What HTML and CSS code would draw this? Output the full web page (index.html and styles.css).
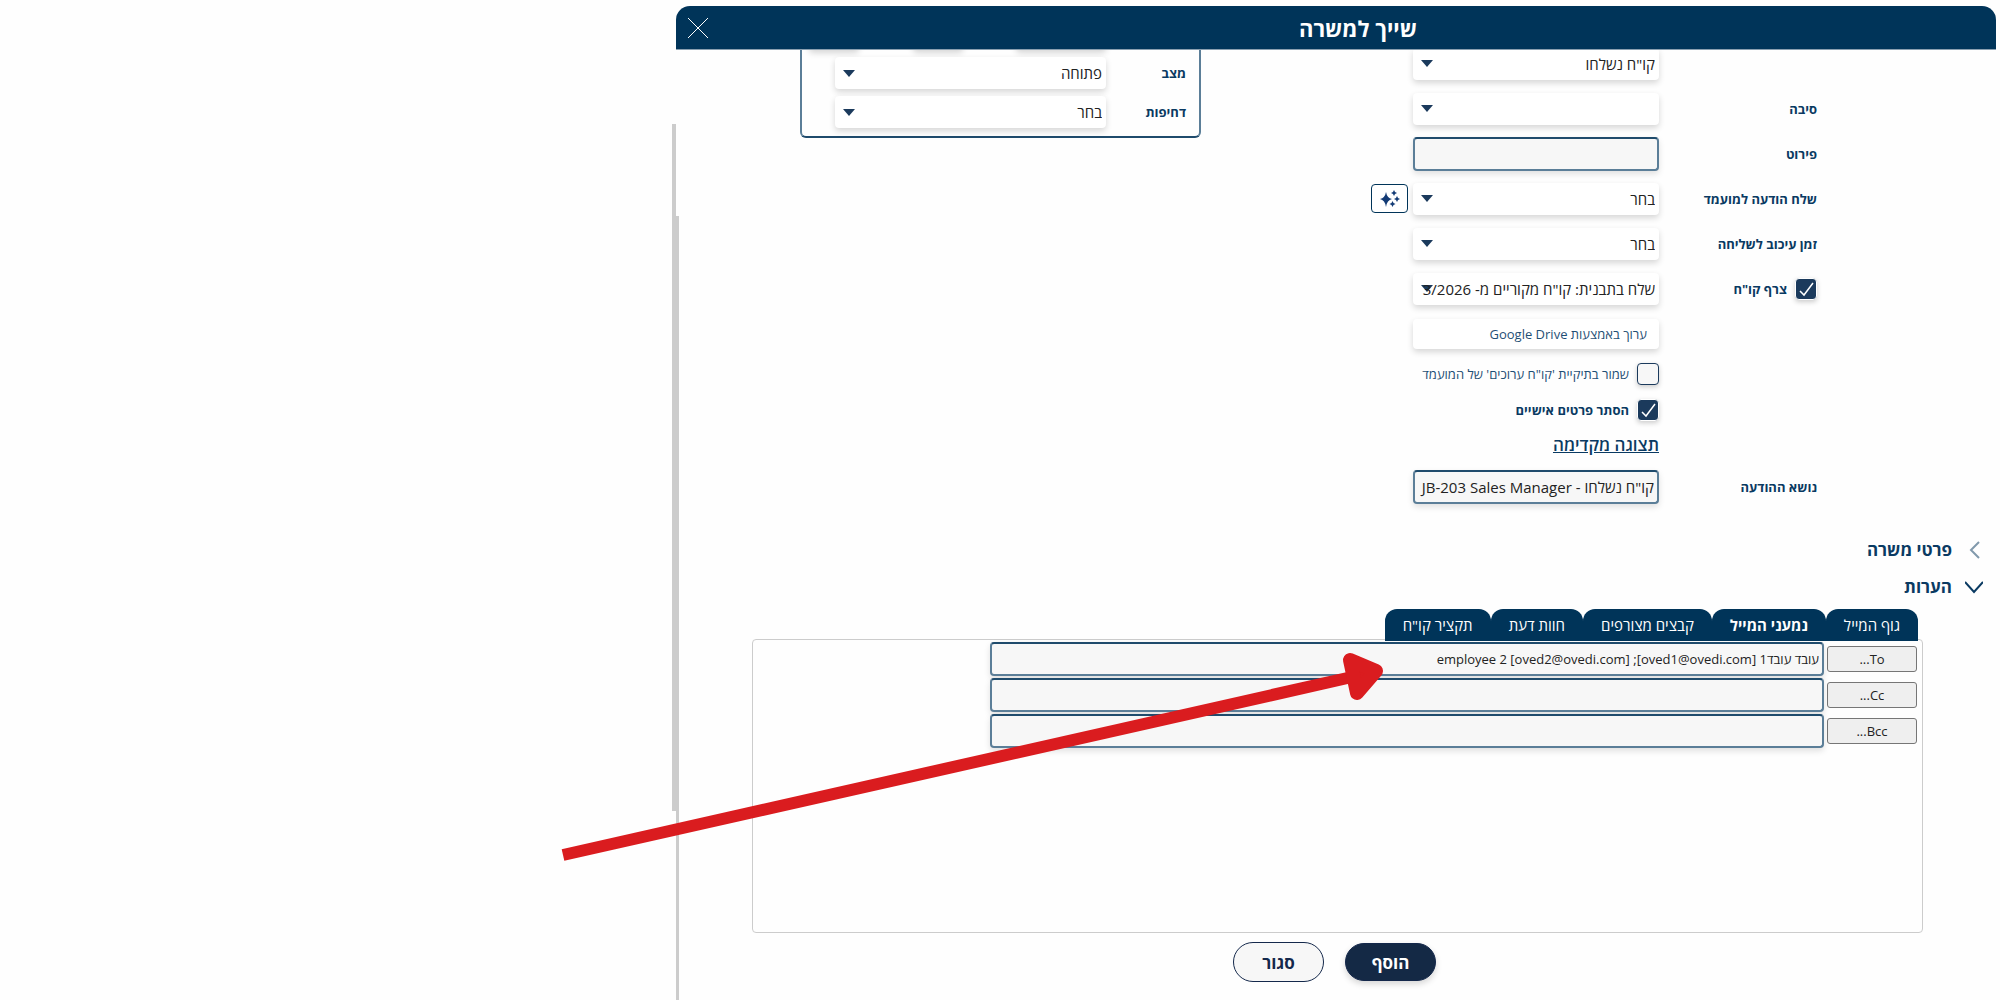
FILE: index.html
```html
<!DOCTYPE html>
<html lang="he" dir="rtl">

<head>
	<meta charset="utf-8">
	<title>שייך למשרה</title>
	<link rel="stylesheet" href="styles.css">
</head>

<body>

<div class="dialog">

	<div class="titleBar">
		<h1>שייך למשרה</h1>
		<button type="button" class="closeButton" aria-label="סגור חלון">
			<svg width="22" height="22" viewBox="0 0 22 22"><path d="M1 1L21 21M21 1L1 21" /></svg>
		</button>
	</div>

	<div class="scrollArea">
		<div class="content">

			<div class="columns">

				<!-- main form -->
				<form class="mainForm">
					<div class="row">
						<span class="label"></span>
						<select aria-label="סטטוס"><option>קו"ח נשלחו</option></select>
					</div>
					<div class="row">
						<label class="label" for="reason">סיבה</label>
						<select id="reason"><option></option></select>
					</div>
					<div class="row">
						<label class="label" for="details">פירוט</label>
						<input type="text" id="details">
					</div>
					<div class="row">
						<label class="label" for="message">שלח הודעה למועמד</label>
						<select id="message"><option>בחר</option></select>
						<button type="button" class="sparkButton" aria-label="ניסוח אוטומטי">
							<svg width="20" height="18" viewBox="0 0 20 18">
								<path d="M6 2Q7 8 12 9Q7 10 6 17Q5 10 0 9Q5 8 6 2Z" />
								<path d="M14 0Q14.500 2.500 17 3Q14.500 3.500 14 6Q13.500 3.500 11 3Q13.500 2.500 14 0Z" />
								<path d="M17 6Q17.500 8.500 20 9Q17.500 9.500 17 12Q16.500 9.500 14 9Q16.500 8.500 17 6Z" />
								<path d="M12.500 11Q13 13.500 15.500 14Q13 14.500 12.500 17Q12 14.500 9.500 14Q12 13.500 12.500 11Z" />
							</svg>
						</button>
					</div>
					<div class="row">
						<label class="label" for="delay">זמן עיכוב לשליחה</label>
						<select id="delay"><option>בחר</option></select>
					</div>
					<div class="row">
						<label class="label checkLabel"><input type="checkbox" checked> צרף קו"ח</label>
						<select aria-label="תבנית"><option>שלח בתבנית: קו"ח מקוריים מ- 3/2026</option></select>
					</div>
					<div class="row">
						<span class="label"></span>
						<button type="button" class="driveButton">ערוך באמצעות Google Drive</button>
					</div>
					<div class="row checkRow">
						<span class="label"></span>
						<label class="checkLabel lightLabel"><input type="checkbox"> שמור בתיקיית 'קו"ח ערוכים' של המועמד</label>
					</div>
					<div class="row checkRow">
						<span class="label"></span>
						<label class="checkLabel"><input type="checkbox" checked> הסתר פרטים אישיים</label>
					</div>
					<div class="row linkRow">
						<span class="label"></span>
						<a href="#">תצוגה מקדימה</a>
					</div>
					<div class="row">
						<label class="label" for="subject">נושא ההודעה</label>
						<input type="text" id="subject" value='קו"ח נשלחו - JB-203 Sales Manager'>
					</div>
				</form>

				<!-- job status box, partly scrolled away -->
				<div class="statusBox">
					<div class="cutRow">
						<span class="wide"></span>
						<span></span>
						<span></span>
					</div>
					<div class="statusRow">
						<label for="state">מצב</label>
						<select id="state"><option>פתוחה</option></select>
					</div>
					<div class="statusRow">
						<label for="urgency">דחיפות</label>
						<select id="urgency"><option>בחר</option></select>
					</div>
				</div>

			</div>

			<h2 class="section closed">
				<svg width="18" height="18" viewBox="0 0 18 18"><path d="M14 1L6 9L14 17" /></svg>
				פרטי משרה
			</h2>
			<h2 class="section">
				<svg width="18" height="18" viewBox="0 0 18 18"><path d="M0 4L9 14L18 4" /></svg>
				הערות
			</h2>

			<div class="tabs">
				<button type="button">גוף המייל</button>
				<button type="button" class="active">נמעני המייל</button>
				<button type="button">קבצים מצורפים</button>
				<button type="button">חוות דעת</button>
				<button type="button">תקציר קו"ח</button>
			</div>
			<div class="panel">
				<div class="mailRow">
					<button type="button">To...</button>
					<input type="text" aria-label="To" value="עובד עובד1 [oved1@ovedi.com]; employee 2 [oved2@ovedi.com]">
				</div>
				<div class="mailRow">
					<button type="button">Cc...</button>
					<input type="text" aria-label="Cc">
				</div>
				<div class="mailRow">
					<button type="button">Bcc...</button>
					<input type="text" aria-label="Bcc">
				</div>
			</div>

			<div class="footer">
				<button type="button" class="primary">הוסף</button>
				<button type="button">סגור</button>
			</div>

		</div>
		<div class="innerBar"></div>
	</div>

</div>

<div class="outerBar"></div>

<!-- arrow pointing at the recipients field -->
<svg class="pointer" viewBox="0 0 2000 1000">
	<path class="shaft" d="M563 855L1352 677" />
	<path class="head" d="M1350 660L1376 671L1357 693Z" />
</svg>

</body>
</html>
```
FILE: styles.css
```css
*
{
	box-sizing: border-box;
}

body
{
	margin: 0;
	height: 100vh;
	display: flex;
	position: relative;
	overflow: hidden;
	background: #fefefe;
	color: #0a3a62;
	font-family: "Open Sans", "Noto Sans", sans-serif;
	font-size: 13px;
}

button, input, select
{
	margin: 0;
	font-family: inherit;
}

.dialog
{
	width: 66%;
	margin: 6px 4px 0 0;
	display: flex;
	flex-direction: column;
}

.titleBar
{
	display: flex;
	align-items: center;
	height: 44px;
	flex: none;
	background: #003459;
	border-bottom: 1px solid #8a9fb0;
	border-radius: 14px 14px 0 0;
	color: white;
}

.titleBar h1
{
	flex: 1;
	margin: 0;
	font-size: 22px;
	line-height: 30px;
	text-align: center;
}

.closeButton
{
	width: 44px;
	height: 40px;
	padding: 0;
	border: 0;
	background: none;
}

.closeButton svg
{
	display: block;
	margin: auto;
	fill: none;
	stroke: white;
}

.scrollArea
{
	flex: 1;
	display: flex;
	min-height: 0;
}

.content
{
	flex: 1;
	min-width: 0;
	overflow: hidden;
}

.innerBar
{
	width: 3px;
	margin-top: 166px;
	background: #cccccc;
}

.outerBar
{
	width: 4px;
	height: 687px;
	margin-top: 124px;
	background: #cccccc;
}

.columns
{
	display: flex;
	align-items: flex-start;
	padding-right: 179px;
}

/* main form */

.mainForm
{
	width: 450px;
	margin-top: -9px;
}

.row
{
	display: flex;
	align-items: center;
	height: 45px;
}

.label
{
	width: 158px;
	flex: none;
	font-weight: bold;
}

.checkRow
{
	height: 36px;
}

.linkRow
{
	height: 36px;
	padding-bottom: 4px;
}

.linkRow a
{
	color: #0a3a62;
	font-size: 17px;
	font-weight: 600;
}

.row select, .row input[type="text"], .driveButton
{
	width: 246px;
}

select
{
	appearance: none;
	height: 32px;
	padding: 0 4px;
	border: 0;
	border-radius: 4px;
	background: white url("data:image/svg+xml,%3Csvg xmlns='http://www.w3.org/2000/svg' width='12' height='7'%3E%3Cpath d='M0 0H12L6 7Z' fill='%231b3a5c'/%3E%3C/svg%3E") no-repeat left 8px center;
	box-shadow: 0 3px 6px rgba(0, 0, 0, 0.16);
	color: #222222;
	font-size: 15px;
}

input[type="text"]
{
	height: 34px;
	padding: 0 3px;
	border: 2px solid #5b7e98;
	border-top-color: #1f4b6c;
	border-radius: 4px;
	background: #f7f7f7;
	box-shadow: 0 3px 6px rgba(0, 0, 0, 0.12);
	color: #222222;
	font-size: 15px;
}

.driveButton
{
	height: 30px;
	padding: 0 12px;
	border: 0;
	border-radius: 4px;
	background: white;
	box-shadow: 0 3px 6px rgba(0, 0, 0, 0.16);
	color: #1f4f75;
	font-size: 13px;
	text-align: right;
}

.sparkButton
{
	width: 37px;
	height: 29px;
	margin-right: 5px;
	padding: 0;
	border: 1px solid #003459;
	border-radius: 4px;
	background: white;
}

.sparkButton svg
{
	display: block;
	margin: auto;
	fill: #123a75;
}

.checkLabel
{
	display: flex;
	align-items: center;
	gap: 8px;
	font-weight: bold;
	white-space: nowrap;
}

.lightLabel
{
	font-weight: normal;
	color: #1f4f75;
}

input[type="checkbox"]
{
	appearance: none;
	width: 22px;
	height: 22px;
	flex: none;
	border: 1px solid #1b3a5c;
	border-radius: 4px;
	background: #f7f7f7;
	box-shadow: 0 2px 5px rgba(0, 0, 0, 0.2);
}

input[type="checkbox"]:checked
{
	border: 1px solid white;
	background: #1b3a5c url("data:image/svg+xml,%3Csvg xmlns='http://www.w3.org/2000/svg' width='20' height='20'%3E%3Cpath d='M4 12L8 16L17 4' fill='none' stroke='white' stroke-width='1.500'/%3E%3C/svg%3E") no-repeat center;
}

/* status box */

.statusBox
{
	width: 401px;
	margin: -30px 166px 0 0;
	padding: 0 13px 8px 33px;
	border: 2px solid #5b7e98;
	border-bottom-color: #1f4b6c;
	border-top: 0;
	border-radius: 0 0 6px 6px;
}

.cutRow
{
	display: flex;
	justify-content: space-between;
	height: 30px;
	margin: 0 80px 7px -26px;
}

.cutRow span
{
	width: 50px;
	border-radius: 4px;
	box-shadow: 0 3px 6px rgba(0, 0, 0, 0.16);
}

.cutRow .wide
{
	width: 90px;
}

.statusRow
{
	display: flex;
	align-items: center;
	justify-content: space-between;
	font-weight: bold;
}

.statusRow + .statusRow
{
	margin-top: 7px;
}

.statusRow select
{
	width: 271px;
}

/* sections and tabs */

.section
{
	display: flex;
	align-items: center;
	gap: 13px;
	height: 37px;
	margin: 0;
	padding-right: 13px;
	font-size: 17px;
}

.closed
{
	margin-top: 22px;
}

.section svg
{
	fill: none;
	stroke: #0a3a62;
	stroke-width: 2;
}

.closed svg
{
	stroke: #8199ac;
}

.tabs
{
	display: flex;
	margin-top: 4px;
	padding-right: 78px;
	position: relative;
}

.tabs button
{
	height: 32px;
	padding: 0 18px;
	border: 0;
	border-radius: 12px 12px 0 0;
	background: #003459;
	color: white;
	font-size: 15px;
}

.tabs .active
{
	font-weight: bold;
}

.panel
{
	height: 294px;
	margin: -2px 73px 0;
	padding: 1px 5px;
	border: 1px solid #cccccc;
	border-radius: 4px;
}

.mailRow
{
	display: flex;
	align-items: center;
	gap: 3px;
	width: 80%;
	height: 36px;
}

.mailRow button
{
	width: 90px;
	height: 26px;
	border: 1px solid #767676;
	border-radius: 3px;
	background: #efefef;
	color: #222222;
	font-size: 13px;
}

.mailRow input[type="text"]
{
	flex: 1;
	min-width: 0;
	font-size: 13px;
}

.footer
{
	display: flex;
	justify-content: center;
	align-items: center;
	gap: 21px;
	margin-top: 9px;
	padding-right: 6px;
}

.footer button
{
	width: 91px;
	height: 40px;
	border: 1px solid #14284b;
	border-radius: 20px;
	background: #f7f7f7;
	color: #14284b;
	font-size: 17px;
	font-weight: bold;
}

.footer .primary
{
	height: 38px;
	background: #142945;
	box-shadow: 0 3px 6px rgba(0, 0, 0, 0.16);
	color: white;
}

.pointer
{
	position: absolute;
	top: 0;
	left: 0;
	width: 100%;
	pointer-events: none;
}

.pointer .shaft
{
	stroke: #da1c1f;
	stroke-width: 12;
}

.pointer .head
{
	fill: #da1c1f;
	stroke: #da1c1f;
	stroke-width: 14;
	stroke-linejoin: round;
}
```
